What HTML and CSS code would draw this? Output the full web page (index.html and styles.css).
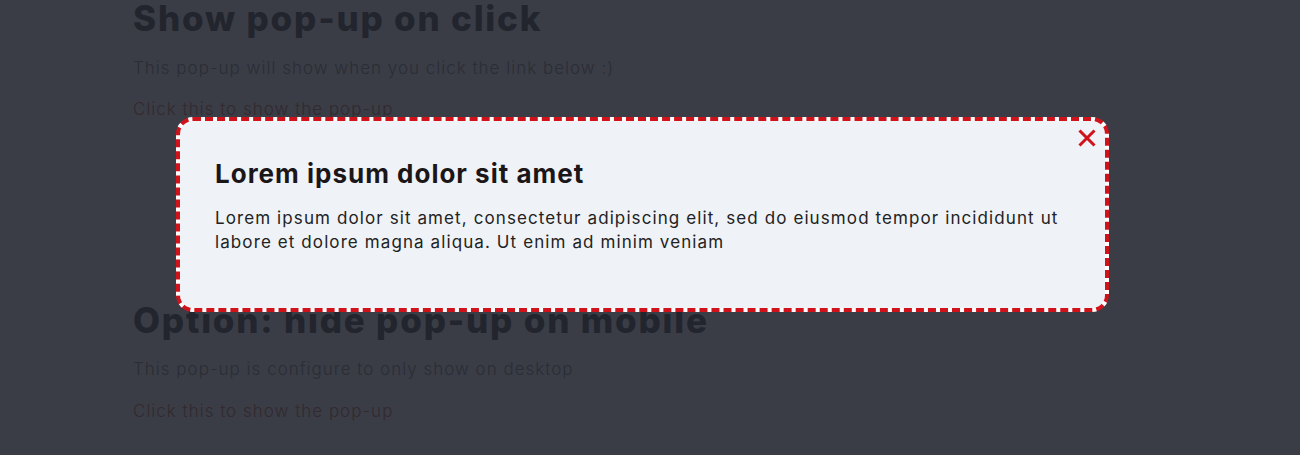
FILE: index.html
```html
<!DOCTYPE html>
<html lang="en">
<head>
<meta charset="utf-8">
<link rel="stylesheet" href="styles.css">
</head>
<body>
<main class="page">
  <section class="block">
    <h1 class="heading">Show pop-up on click</h1>
    <p class="text">This pop-up will show when you click the link below :)</p>
    <p class="link">Click this to show the pop-up</p>
  </section>
  <section class="block second">
    <h1 class="heading">Option: hide pop-up on mobile</h1>
    <p class="text">This pop-up is configure to only show on desktop</p>
    <p class="link">Click this to show the pop-up</p>
  </section>
</main>
<div class="popup">
  <button class="close" aria-label="Close">
    <svg width="18" height="18" viewBox="0 0 18 18"><path d="M1.5 1.5 L16.5 16.5 M16.5 1.5 L1.5 16.5" stroke="#d0121b" stroke-width="3" stroke-linecap="butt" fill="none"/></svg>
  </button>
  <h2 class="popup-title">Lorem ipsum dolor sit amet</h2>
  <p class="popup-text">Lorem ipsum dolor sit amet, consectetur adipiscing elit, sed do eiusmod tempor incididunt ut labore et dolore magna aliqua. Ut enim ad minim veniam</p>
</div>
</body>
</html>
```
FILE: styles.css
```css
html, body {
  margin: 0;
  padding: 0;
  height: 100%;
  overflow: hidden;
}
body {
  background: #3a3d46;
  font-family: Inter, "Noto Sans", sans-serif;
  color: #262930;
}
.page {
  padding: 0 0 0 133px;
}
.heading {
  margin: 0;
  font-size: 35px;
  font-weight: 800;
  color: #22252d;
  line-height: 36px;
  letter-spacing: 1.8px;
}
.second {
  padding-top: 181px;
}
.text {
  margin: 20px 0 0;
  font-size: 17px;
  font-weight: 300;
  line-height: 24px;
  letter-spacing: 1px;
  color: #2a2d35;
}
.second .text {
  margin-top: 19px;
}
.link {
  margin: 17px 0 0;
  font-size: 17px;
  font-weight: 300;
  line-height: 24px;
  letter-spacing: 1px;
  color: #33292e;
}
.second .link {
  margin-top: 18px;
}
.popup {
  position: absolute;
  left: 176px;
  top: 117px;
  width: 933px;
  height: 195px;
  box-sizing: border-box;
  border: 4px dashed #d0121b;
  border-radius: 17px;
  background: linear-gradient(#eff2f7, #eff2f7) padding-box, #ffffff border-box;
  padding: 38px 35px 0;
  color: #1b1618;
}
.close {
  position: absolute;
  right: 9px;
  top: 8px;
  width: 18px;
  height: 18px;
  padding: 0;
  border: 0;
  background: none;
  display: flex;
  align-items: center;
  justify-content: center;
}
.popup-title {
  margin: 0;
  font-size: 26px;
  font-weight: 700;
  line-height: 30px;
  letter-spacing: 1px;
}
.popup-text {
  margin: 17px 0 0;
  font-size: 17px;
  font-weight: 400;
  line-height: 24px;
  letter-spacing: 1.1px;
  color: #222;
}
```
